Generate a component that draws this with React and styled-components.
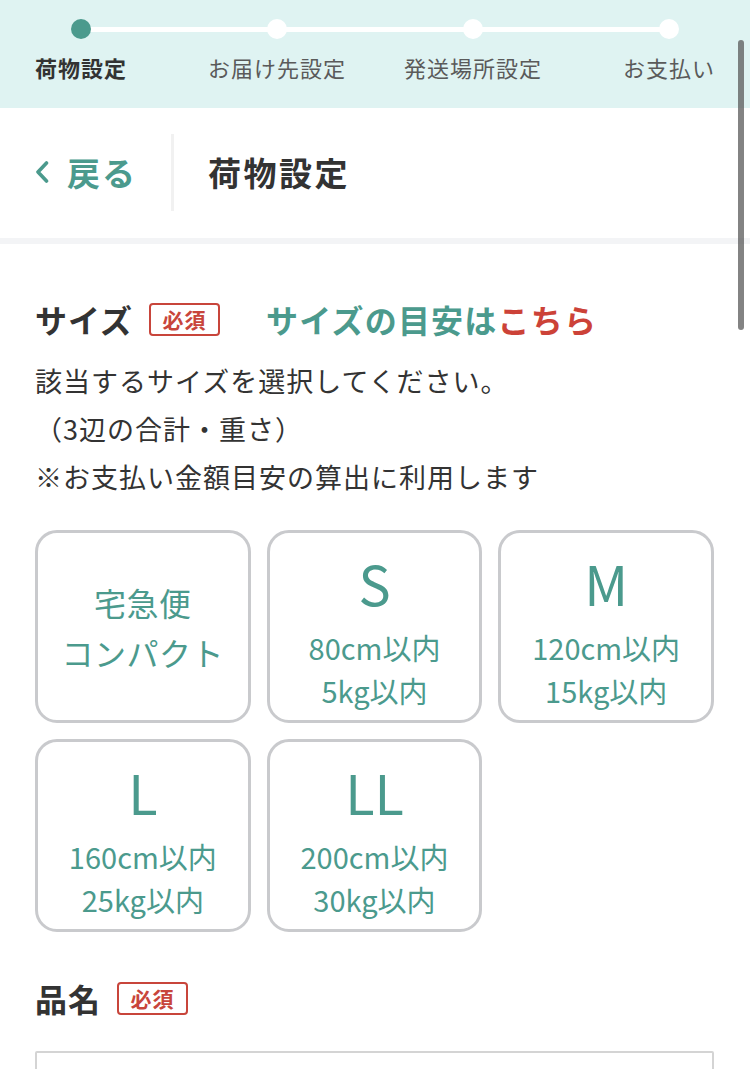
import React from "react";
import styled, { createGlobalStyle } from "styled-components";

const teal = "#4b9a8d";
const red = "#c8453b";
const ink = "#333333";

const GlobalStyle = createGlobalStyle`
	html, body {
		margin: 0;
		padding: 0;
		overflow: hidden;
		background: #ffffff;
	}
	body {
		font-family: "Noto Sans CJK JP", "Noto Sans", sans-serif;
		color: ${ink};
	}
	* { box-sizing: border-box; }
`;

/**
 * Stepper
 */
const StepBand = styled.div`
	height: 108px;
	background: #dff3f2;
	overflow: hidden;
`;

const StepRow = styled.div`
	display: grid;
	grid-template-columns: repeat(4, 196px);
	width: 784px;
	margin-left: -17px;
	padding-top: 19px;
`;

const Step = styled.div`
	position: relative;
	display: flex;
	flex-direction: column;
	align-items: center;

	&:not(:first-child)::before {
		content: "";
		position: absolute;
		top: 8px;
		left: -50%;
		right: 50%;
		height: 5px;
		background: #ffffff;
	}
`;

const Dot = styled.span`
	position: relative;
	z-index: 1;
	width: 20px;
	height: 20px;
	border-radius: 50%;
	background: ${(p) => (p.$active ? teal : "#ffffff")};
`;

const StepLabel = styled.span`
	margin-top: 13px;
	font-size: 22px;
	line-height: 30px;
	letter-spacing: 1px;
	white-space: nowrap;
	font-weight: ${(p) => (p.$active ? 700 : 400)};
	color: ${(p) => (p.$active ? ink : "#5a5a5a")};
`;

/**
 * Header
 */
const Header = styled.header`
	display: flex;
	align-items: center;
	height: 136px;
	padding-bottom: 2px;
	border-bottom: 6px solid #f3f4f6;
`;

const BackButton = styled.a`
	display: flex;
	align-items: center;
	gap: 18px;
	width: 174px;
	height: 77px;
	padding-left: 35px;
	border-right: 3px solid #f1f1f1;
	color: ${teal};
	font-size: 33px;
	font-weight: 700;
	letter-spacing: 2px;
	text-decoration: none;
	cursor: pointer;
`;

const HeaderTitle = styled.h1`
	margin: 0 0 0 34px;
	font-size: 33px;
	font-weight: 700;
	letter-spacing: 2.5px;
	color: ${ink};
`;

/**
 * Form
 */
const Form = styled.main`
	padding: 55px 36px 0 35px;
`;

const FieldHead = styled.div`
	display: flex;
	align-items: center;
	height: 40px;
	margin-top: ${(p) => p.$top || 0}px;
`;

const FieldTitle = styled.h2`
	margin: 0;
	font-size: 32px;
	font-weight: 700;
	letter-spacing: 1px;
	color: ${ink};
`;

const Required = styled.span`
	display: inline-flex;
	align-items: center;
	justify-content: center;
	width: 71px;
	height: 33px;
	margin-left: 16px;
	border: 2px solid ${red};
	border-radius: 4px;
	color: ${red};
	font-size: 21px;
	font-weight: 700;
	letter-spacing: 1px;
`;

const GuideLink = styled.a`
	margin-left: 46px;
	font-size: 32px;
	font-weight: 700;
	letter-spacing: 1.2px;
	color: ${teal};
	cursor: pointer;

	em {
		font-style: normal;
		color: #cc4238;
	}
`;

const Note = styled.p`
	margin: 18px 0 0;
	font-size: 27px;
	line-height: 48px;
	letter-spacing: 1px;
	color: ${ink};
`;

const SizeGrid = styled.div`
	display: grid;
	grid-template-columns: repeat(3, 1fr);
	gap: 16px;
	margin-top: 29px;
`;

const SizeCard = styled.button`
	display: flex;
	flex-direction: column;
	align-items: center;
	justify-content: ${(p) => (p.$centered ? "center" : "flex-start")};
	height: 193px;
	padding: ${(p) => (p.$centered ? "0" : "20px 0 0")};
	border: 3px solid #c9cacd;
	border-radius: 22px;
	background: #ffffff;
	color: ${teal};
	font-family: inherit;
	cursor: pointer;
`;

const SizeLetter = styled.span`
	font-size: 54px;
	line-height: 60px;
	margin-bottom: 13px;
`;

const SizeSpec = styled.span`
	font-size: 29px;
	line-height: 43px;
	white-space: nowrap;
`;

const SizeName = styled.span`
	font-size: 32px;
	line-height: 50px;
	letter-spacing: 0.5px;
`;

const TextInput = styled.input`
	display: block;
	width: 100%;
	height: 90px;
	margin-top: 33px;
	border: 2px solid #d4d4d4;
	border-radius: 2px;
	font-family: inherit;
	font-size: 26px;
	padding: 0 20px;
	outline: none;
`;

const ScrollThumb = styled.div`
	position: fixed;
	top: 40px;
	right: 6px;
	width: 6px;
	height: 290px;
	border-radius: 3px;
	background: rgba(90, 90, 90, 0.75);
`;

const steps = ["荷物設定", "お届け先設定", "発送場所設定", "お支払い"];

const sizes = [
	{ letter: "S", cm: "80cm以内", kg: "5kg以内" },
	{ letter: "M", cm: "120cm以内", kg: "15kg以内" },
	{ letter: "L", cm: "160cm以内", kg: "25kg以内" },
	{ letter: "LL", cm: "200cm以内", kg: "30kg以内" },
];

function Chevron() {
	return (
		<svg width="14" height="24" viewBox="0 0 14 24" fill="none">
			<polyline
				points="11.5,3 3,12 11.5,21"
				stroke={teal}
				strokeWidth="3.6"
				strokeLinecap="round"
				strokeLinejoin="round"
			/>
		</svg>
	);
}

export default function App() {
	return (
		<>
			<GlobalStyle />
			<StepBand>
				<StepRow>
					{steps.map((s, i) => (
						<Step key={s}>
							<Dot $active={i === 0} />
							<StepLabel $active={i === 0}>{s}</StepLabel>
						</Step>
					))}
				</StepRow>
			</StepBand>

			<Header>
				<BackButton>
					<Chevron />
					戻る
				</BackButton>
				<HeaderTitle>荷物設定</HeaderTitle>
			</Header>

			<Form>
				<FieldHead>
					<FieldTitle>サイズ</FieldTitle>
					<Required>必須</Required>
					<GuideLink>
						サイズの目安は<em>こちら</em>
					</GuideLink>
				</FieldHead>
				<Note>
					該当するサイズを選択してください。
					<br />
					（3辺の合計・重さ）
					<br />
					※お支払い金額目安の算出に利用します
				</Note>

				<SizeGrid>
					<SizeCard $centered>
						<SizeName>宅急便</SizeName>
						<SizeName>コンパクト</SizeName>
					</SizeCard>
					{sizes.map((s) => (
						<SizeCard key={s.letter}>
							<SizeLetter>{s.letter}</SizeLetter>
							<SizeSpec>{s.cm}</SizeSpec>
							<SizeSpec>{s.kg}</SizeSpec>
						</SizeCard>
					))}
				</SizeGrid>

				<FieldHead $top={46}>
					<FieldTitle>品名</FieldTitle>
					<Required>必須</Required>
				</FieldHead>
				<TextInput />
			</Form>
			<ScrollThumb />
		</>
	);
}
